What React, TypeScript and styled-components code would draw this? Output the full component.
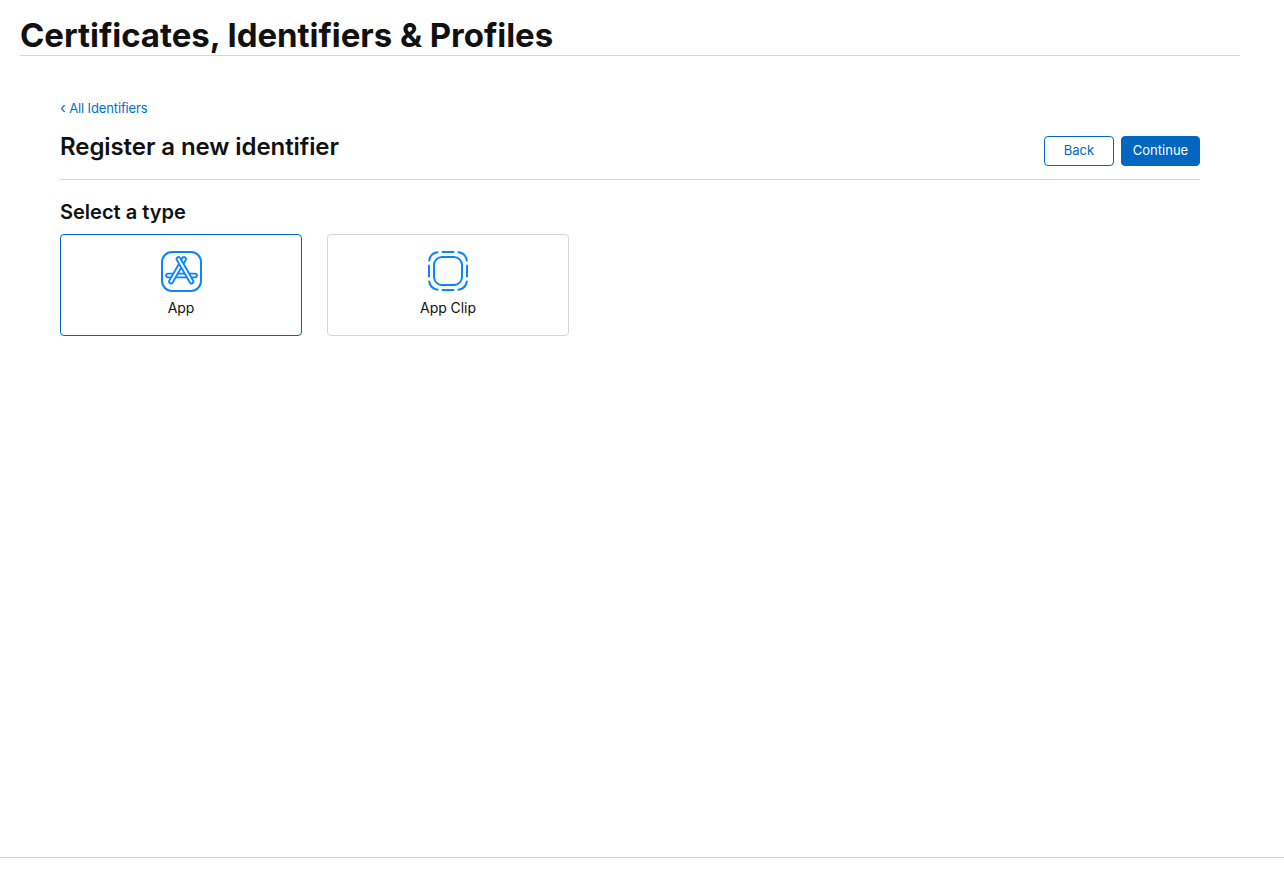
import React from 'react';
import styled, { createGlobalStyle } from 'styled-components';

const GlobalStyle = createGlobalStyle`
  html, body {
    margin: 0;
    padding: 0;
    background: #fff;
    color: #111;
    font-family: Inter, "Liberation Sans", sans-serif;
  }
`;

// each stick is a wide blue line with a narrower white one on top, so it reads as an outline
const Stick = ({ d }: { d: string }) => (
  <>
    <path d={d} stroke="#0a84ff" strokeWidth="5.6" strokeLinecap="round" />
    <path d={d} stroke="#fff" strokeWidth="2" strokeLinecap="round" />
  </>
);

const AppIcon = () => (
  <svg width="42" height="42" viewBox="0 0 42 42" fill="none">
    <rect x="2" y="2" width="39" height="39" rx="10" stroke="#0a84ff" strokeWidth="2" />
    <Stick d="M8 25.5 H35" />
    <Stick d="M24 9 L11 31.5" />
    <Stick d="M18.5 9 L31.5 31.5" />
  </svg>
);

const AppClipIcon = () => (
  <svg width="42" height="42" viewBox="0 0 42 42" fill="none" stroke="#0a84ff" strokeWidth="2" strokeLinecap="round">
    <rect x="7" y="7" width="28" height="28" rx="8" />
    <path d="M15.5 2 H26.5" />
    <path d="M15.5 40 H26.5" />
    <path d="M2 15.5 V26.5" />
    <path d="M40 15.5 V26.5" />
    <path d="M10.5 2.2 C5.4 3 3 5.4 2.2 10.5" />
    <path d="M31.5 2.2 C36.6 3 39 5.4 39.8 10.5" />
    <path d="M10.5 39.8 C5.4 39 3 36.6 2.2 31.5" />
    <path d="M31.5 39.8 C36.6 39 39 36.6 39.8 31.5" />
  </svg>
);

const App = () => (
  <>
    <GlobalStyle />
    <Page>
      <Header>
        <Title>Certificates, Identifiers &amp; Profiles</Title>
      </Header>
      <Main>
        <BackLink href="#">
          <Chevron>‹</Chevron> All Identifiers
        </BackLink>
        <TitleRow>
          <Subtitle>Register a new identifier</Subtitle>
          <Actions>
            <ActionButton>Back</ActionButton>
            <ActionButton $primary>Continue</ActionButton>
          </Actions>
        </TitleRow>
        <SectionTitle>Select a type</SectionTitle>
        <TypeGrid>
          <TypeCard $selected>
            <AppIcon />
            <TypeLabel>App</TypeLabel>
          </TypeCard>
          <TypeCard>
            <AppClipIcon />
            <TypeLabel>App Clip</TypeLabel>
          </TypeCard>
        </TypeGrid>
      </Main>
      <Footer />
    </Page>
  </>
);

const Page = styled.div`
  display: flex;
  flex-direction: column;
  height: 869px;
  overflow: hidden;
`;

const Header = styled.header`
  width: 1220px;
  height: 56px;
  box-sizing: border-box;
  margin-left: 20px;
  border-bottom: 1px solid #d6d6d6;
`;

const Title = styled.h1`
  margin: 0;
  padding-top: 15px;
  font-size: 33px;
  line-height: 40px;
  font-weight: 700;
  letter-spacing: -0.05px;
  color: #111;
  white-space: nowrap;
`;

const Main = styled.main`
  flex: 1;
  width: 1140px;
  margin-left: 60px;
  padding-top: 43px;
`;

const BackLink = styled.a`
  display: block;
  font-size: 13px;
  line-height: 18px;
  letter-spacing: -0.13px;
  color: #0070c9;
  text-decoration: none;
`;

const Chevron = styled.span`
  font-size: 15px;
  line-height: 18px;
`;

const TitleRow = styled.div`
  display: flex;
  justify-content: space-between;
  height: 53px;
  box-sizing: border-box;
  margin-top: 10px;
  border-bottom: 1px solid #d6d6d6;
`;

const Subtitle = styled.h2`
  margin: 0;
  font-size: 24px;
  line-height: 40px;
  font-weight: 600;
  letter-spacing: -0.08px;
  color: #111;
`;

const Actions = styled.div`
  display: flex;
  gap: 7px;
  padding-top: 9px;
`;

const ActionButton = styled.button<{ $primary?: boolean }>`
  height: 30px;
  width: ${(p) => (p.$primary ? '79px' : '70px')};
  padding: 0 0 2px;
  box-sizing: border-box;
  border: 1px solid #0066bf;
  border-radius: 4px;
  background: ${(p) => (p.$primary ? '#0066bf' : '#fff')};
  color: ${(p) => (p.$primary ? '#fff' : '#0066bf')};
  font-family: inherit;
  font-size: 13px;
`;

const SectionTitle = styled.h3`
  margin: 19px 0 0;
  font-size: 20px;
  line-height: 26px;
  font-weight: 600;
  color: #111;
`;

const TypeGrid = styled.div`
  display: flex;
  gap: 25px;
  margin-top: 9px;
`;

const TypeCard = styled.div<{ $selected?: boolean }>`
  display: flex;
  flex-direction: column;
  align-items: center;
  width: 242px;
  height: 102px;
  box-sizing: border-box;
  padding-top: 15px;
  border: 1px solid ${(p) => (p.$selected ? '#0066bf' : '#d6d6d6')};
  border-radius: 4px;
`;

const TypeLabel = styled.span`
  margin-top: 7px;
  font-size: 14px;
  line-height: 18px;
  letter-spacing: -0.05px;
  color: #111;
`;

const Footer = styled.footer`
  height: 11px;
  border-top: 1px solid #d6d6d6;
`;

export default App;
